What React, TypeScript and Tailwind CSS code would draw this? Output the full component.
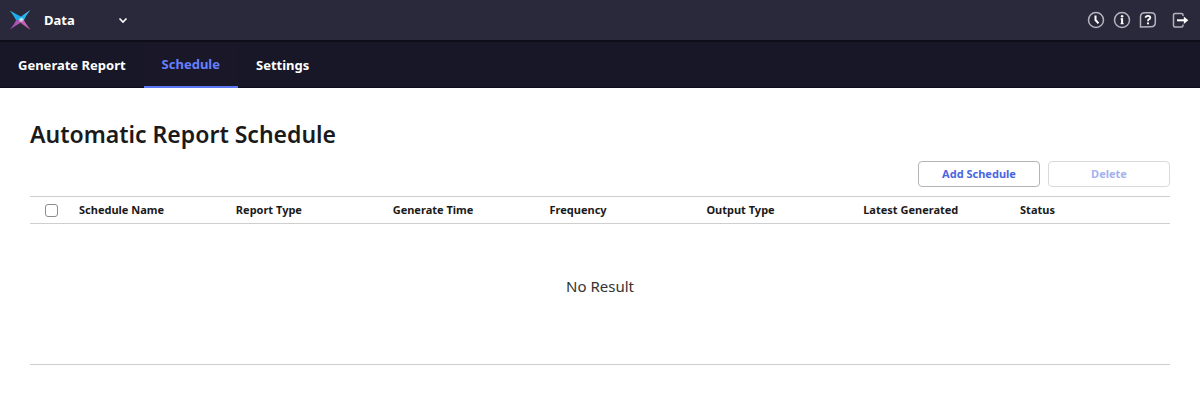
import React from "react";

const tabs = ["Generate Report", "Schedule", "Settings"];

const columns = [
  "Schedule Name",
  "Report Type",
  "Generate Time",
  "Frequency",
  "Output Type",
  "Latest Generated",
  "Status",
];

function Logo() {
  return (
    <svg width="22" height="22" viewBox="0 0 22 22" aria-hidden="true">
      <defs>
        <linearGradient id="logoTop" x1="0" y1="0" x2="1" y2="0">
          <stop offset="0" stopColor="#35b4ea" />
          <stop offset="0.5" stopColor="#12a4ea" />
          <stop offset="1" stopColor="#55c4ee" />
        </linearGradient>
        <linearGradient id="logoBottom" x1="0" y1="0" x2="1" y2="0">
          <stop offset="0" stopColor="#9a4fb8" />
          <stop offset="0.5" stopColor="#b558b4" />
          <stop offset="1" stopColor="#d873b6" />
        </linearGradient>
        <radialGradient id="logoShine" cx="0.6" cy="0.5" r="0.45">
          <stop offset="0" stopColor="#ffffff" />
          <stop offset="1" stopColor="#ffffff" stopOpacity="0" />
        </radialGradient>
      </defs>
      <path d="M0.800 1.500Q8.500 6 12 7.500Q15 5.200 21.500 1Q16.500 7 15 11.200H7Q6 8.500 0.800 1.500Z" fill="url(#logoTop)" />
      <path d="M7 11.200H15Q16.400 14.500 21.500 20.800Q15 16.300 11.500 13.800Q8 16 0.500 20.800Q6 14.500 7 11.200Z" fill="url(#logoBottom)" />
      <path d="M8 11L12 7.500L15 9V12L12 14Z" fill="url(#logoShine)" />
    </svg>
  );
}

function IconButton({ label, children }: { label: string; children: React.ReactNode }) {
  return (
    <button type="button" aria-label={label} className="text-[#b4b4be]">
      <svg width="18" height="18" viewBox="0 0 18 18" fill="none" stroke="currentColor" strokeWidth="1.5" aria-hidden="true">
        {children}
      </svg>
    </button>
  );
}

function TopBar() {
  return (
    <header className="flex h-[42px] items-center justify-between border-b-2 border-[#0e0e1a] bg-[#29293b] pr-[11px] pl-[9px]">
      <div className="flex items-center gap-[13px]">
        <Logo />
        <div className="relative flex w-[90px] items-center">
          <select
            aria-label="Product"
            defaultValue="Data"
            className="w-full appearance-none bg-transparent text-[13px] leading-5 font-bold text-white"
          >
            <option>Data</option>
          </select>
          <svg
            className="pointer-events-none absolute right-1.5"
            width="10"
            height="10"
            viewBox="0 0 10 10"
            fill="none"
            stroke="#fff"
            strokeWidth="1.6"
            aria-hidden="true"
          >
            <path d="M1.500 3.500L5 7L8.500 3.500" />
          </svg>
        </div>
      </div>
      <div className="flex items-center gap-2">
        <IconButton label="History">
          <circle cx="9" cy="9" r="7.500" />
          <path d="M8.500 4.500V9L11.500 12.300" stroke="#fff" strokeWidth="2" />
        </IconButton>
        <IconButton label="Information">
          <circle cx="9" cy="9" r="7.500" />
          <path d="M7.600 7.900H9.200V12.600M7.600 12.600H10.600" stroke="#fff" strokeWidth="1.400" />
          <path d="M9.100 7.500V13" stroke="#fff" strokeWidth="2" />
          <circle cx="9.100" cy="5.200" r="1.200" fill="#fff" stroke="none" />
        </IconButton>
        <IconButton label="Help">
          <path d="M1.500 16V6Q1.500 1.800 6 1.800H12Q16.300 1.800 16.300 6V11.500Q16.300 15.700 12 15.700Z" />
          <path d="M6.600 6.800Q6.700 4.800 9 4.800Q11.300 4.800 11.300 6.700Q11.300 7.800 9.800 8.400Q9 8.800 9 10.200" stroke="#fff" strokeWidth="1.800" />
          <circle cx="9" cy="12.400" r="1.100" fill="#fff" stroke="none" />
        </IconButton>
        <div className="ml-1.5 flex">
          <IconButton label="Log out">
            <path d="M12 5V4Q12 2.500 10.500 2.500H4Q2.500 2.500 2.500 4V14.500Q2.500 16 4 16H10.500Q12 16 12 14.500V13.500" />
            <path d="M6 9.300H14.500" stroke="#fff" strokeWidth="2" />
            <path d="M12.800 5.500L17.300 9.300L12.800 13.100Z" fill="#fff" stroke="none" />
          </IconButton>
        </div>
      </div>
    </header>
  );
}

function Tabs() {
  return (
    <nav className="flex h-[46px] bg-[#171728]">
      {tabs.map((tab) =>
        tab === "Schedule" ? (
          <a
            key={tab}
            href="#schedule"
            aria-current="page"
            className="flex items-center border-b-2 border-[#5b78f5] bg-[#1a1728] px-[18px] text-[13px] leading-5 font-bold text-[#6680ff]"
          >
            {tab}
          </a>
        ) : (
          <a
            key={tab}
            href="#"
            className="flex items-center border-b border-[#0e0e1a] px-[18px] text-[13px] leading-5 font-bold text-white last:grow"
          >
            {tab}
          </a>
        )
      )}
    </nav>
  );
}

export default function App() {
  return (
    <div className="bg-white font-['Noto_Sans','Open_Sans',sans-serif] text-[#1a1a1a]">
      <TopBar />
      <Tabs />
      <main className="px-[30px] pt-[30px] pb-8">
        <h1 className="text-[23px] leading-8 font-semibold">Automatic Report Schedule</h1>
        <div className="mt-[11px] flex justify-end gap-2">
          <button
            type="button"
            className="h-[26px] w-[122px] rounded border border-[#b4b4b4] text-[11px] leading-4 font-bold text-[#4a66e0]"
          >
            Add Schedule
          </button>
          <button
            type="button"
            disabled
            className="h-[26px] w-[122px] rounded border border-[#dadada] text-[11px] leading-4 font-bold text-[#a4b2f0]"
          >
            Delete
          </button>
        </div>
        <table className="mt-[9px] w-full table-fixed border-collapse">
          <thead>
            <tr className="h-[27px] border-y border-[#cfcfcf]">
              <th className="w-[42px] p-0">
                <input
                  type="checkbox"
                  aria-label="Select all schedules"
                  className="mx-auto block size-[13px] appearance-none rounded-[3px] border border-[#8c8c8c] bg-white checked:bg-[#4a66e0]"
                />
              </th>
              {columns.map((column) => (
                <th key={column} className="px-[7px] py-0 text-left text-[11px] leading-4 font-bold whitespace-nowrap">
                  {column}
                </th>
              ))}
            </tr>
          </thead>
          <tbody>
            <tr className="border-b border-[#cfcfcf]">
              <td colSpan={8} className="pt-[50px] pb-[66px] text-center text-[15px] leading-6 text-[#333333]">
                No Result
              </td>
            </tr>
          </tbody>
        </table>
      </main>
    </div>
  );
}
